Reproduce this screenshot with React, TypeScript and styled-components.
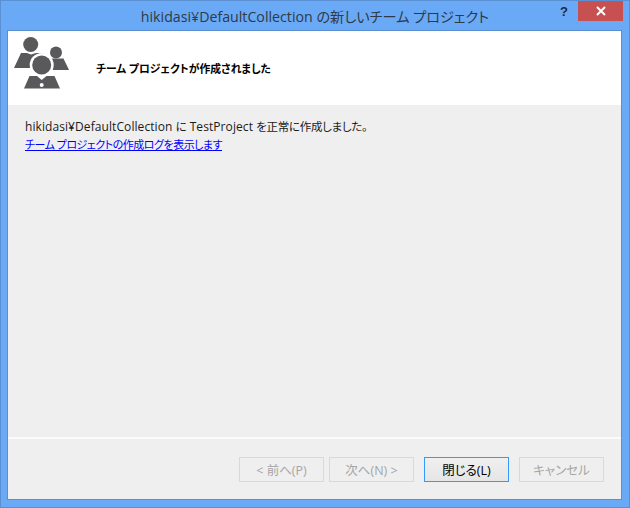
import React from "react";
import styled, { createGlobalStyle } from "styled-components";

const GlobalStyle = createGlobalStyle`
  html, body {
    margin: 0;
    padding: 0;
    background: #69a9f6;
  }
`;

const UI_FONT = `"Open Sans", "Noto Sans CJK JP", sans-serif`;

const Frame = styled.div`
  box-sizing: border-box;
  width: 630px;
  height: 508px;
  display: flex;
  flex-direction: column;
  background: #69a9f6;
  border: 1px solid #5a8fd2;
  font-family: ${UI_FONT};
  font-feature-settings: "palt";
`;

const TitleBar = styled.div`
  position: relative;
  height: 29px;
  flex: none;
  display: flex;
  align-items: center;
  justify-content: center;
  padding-top: 1px;
  box-sizing: border-box;
`;

const TitleText = styled.div`
  font-size: 14.2px;
  color: #2f3a48;
  white-space: nowrap;
`;

const HelpGlyph = styled.div`
  position: absolute;
  top: 1px;
  right: 61px;
  font-family: "Liberation Sans", sans-serif;
  font-weight: 700;
  font-size: 13px;
  line-height: 19px;
  color: #1e2a38;
`;

const CloseButton = styled.div`
  position: absolute;
  top: 0;
  right: 6px;
  width: 45px;
  height: 20px;
  background: #c75050;
  display: flex;
  align-items: center;
  justify-content: center;
`;

const Client = styled.div`
  flex: 1;
  margin: 0 7px 7px 6px;
  display: flex;
  flex-direction: column;
  background: #efefef;
  border: 1px solid #5a8fd2;
`;

const Header = styled.div`
  height: 74px;
  flex: none;
  background: #fff;
  display: flex;
  align-items: flex-start;
  box-sizing: border-box;
  padding: 2px 0 0 4px;
`;

const HeaderTitle = styled.div`
  margin-left: 26px;
  margin-top: 28px;
  font-size: 10.8px;
  line-height: 16px;
  font-weight: 700;
  color: #000;
  white-space: nowrap;
`;

const Body = styled.div`
  flex: 1;
  padding: 13px 17px 0;
  font-size: 12px;
  line-height: 18px;
  color: #1a1a1a;
`;

const Message = styled.div`
  white-space: nowrap;
  letter-spacing: 0.08px;
`;

const Jp = styled.span`
  font-size: 11.5px;
  letter-spacing: -0.3px;
`;

const LogLink = styled.a`
  display: block;
  font-size: 11px;
  letter-spacing: -0.5px;
  color: #0000ff;
  text-decoration: underline;
  white-space: nowrap;
`;

const Footer = styled.div`
  flex: none;
  height: 62px;
  border-top: 2px solid #fbfbfb;
  box-sizing: border-box;
  display: flex;
  justify-content: flex-end;
  gap: 5px;
  padding: 18px 17px 0 0;
`;

const Button = styled.button<{ $primary?: boolean; $gapLeft?: boolean }>`
  box-sizing: border-box;
  width: 85px;
  height: 25px;
  padding: 0;
  margin-left: ${(p) => (p.$gapLeft ? "5px" : "0")};
  font-family: ${UI_FONT};
  font-feature-settings: "palt";
  font-size: 12.5px;
  color: ${(p) => (p.$primary ? "#000" : "#a6a6a6")};
  border: 1px solid ${(p) => (p.$primary ? "#3399ff" : "#d9d9d9")};
  background: ${(p) =>
    p.$primary ? "linear-gradient(#f0f0f0, #e5e5e5)" : "#efefef"};
`;

const TeamIcon = () => (
  <svg width="58" height="58" viewBox="12 33 58 58" style={{ flex: "none" }}>
    <g fill="#59595b">
      <circle cx="30.7" cy="44.5" r="7.5" />
      <path d="M21 53 L27 53 L31 54.5 L36 53 L43 53 L43 68 L14 68 Z" />
      <circle cx="56" cy="52.5" r="6" />
      <path d="M51 58.5 L63.5 58.5 L69 70 L45 70 Z" />
    </g>
    <circle cx="41.7" cy="65" r="12" fill="#fff" />
    <rect x="24" y="75" width="36" height="3" fill="#fff" />
    <g fill="#59595b">
      <circle cx="41.7" cy="65" r="9.5" />
      <path d="M29.5 76 L37 76 L41.7 80 L46.5 76 L54.5 76 L60 88.5 L24 88.5 Z" />
    </g>
    <circle cx="41.7" cy="85" r="2" fill="#fff" />
  </svg>
);

export default function App() {
  return (
    <>
      <GlobalStyle />
      <Frame>
        <TitleBar>
          <TitleText>hikidasi¥DefaultCollection の新しいチーム プロジェクト</TitleText>
          <HelpGlyph>?</HelpGlyph>
          <CloseButton>
            <svg width="10" height="10" viewBox="0 0 10 10">
              <path d="M1 1 L9 9 M9 1 L1 9" stroke="#fff" strokeWidth="2" />
            </svg>
          </CloseButton>
        </TitleBar>
        <Client>
          <Header>
            <TeamIcon />
            <HeaderTitle>チーム プロジェクトが作成されました</HeaderTitle>
          </Header>
          <Body>
            <Message>
              hikidasi¥DefaultCollection <Jp>に</Jp> TestProject <Jp>を正常に作成しました。</Jp>
            </Message>
            <LogLink href="#">チーム プロジェクトの作成ログを表示します</LogLink>
          </Body>
          <Footer>
            <Button disabled>&lt; 前へ(P)</Button>
            <Button disabled>次へ(N) &gt;</Button>
            <Button $primary $gapLeft>閉じる(L)</Button>
            <Button disabled $gapLeft>キャンセル</Button>
          </Footer>
        </Client>
      </Frame>
    </>
  );
}
